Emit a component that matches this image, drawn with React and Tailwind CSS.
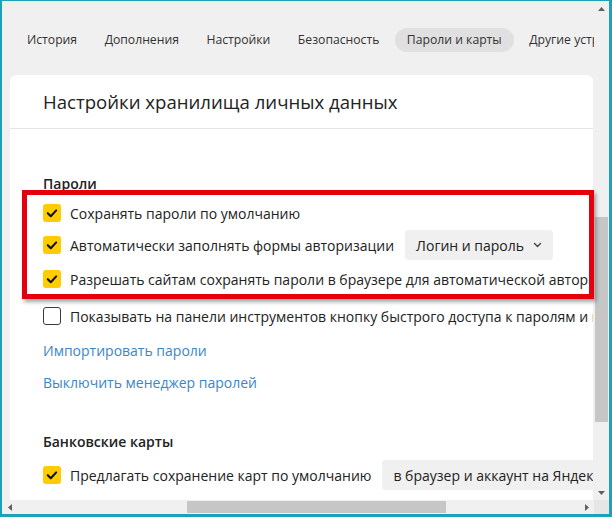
import React from "react";

const Check = () => (
  <span className="w-[18px] h-[18px] rounded-[3px] bg-[#ffcc00] flex items-center justify-center shrink-0">
    <svg width="18" height="18" viewBox="0 0 18 18">
      <path d="M4.8 9.2 L7.8 12.2 L13.2 6.4" fill="none" stroke="#111" strokeWidth="2.1" strokeLinecap="round" strokeLinejoin="round" />
    </svg>
  </span>
);

const Empty = () => (
  <span className="w-[18px] h-[18px] rounded-[3px] border-[1.5px] border-[#3a3a3a] bg-white shrink-0" />
);

const Chevron = () => (
  <svg width="9" height="6" viewBox="0 0 9 6" className="ml-[9px]">
    <path d="M1.5 1.5 L4.5 4.5 L7.5 1.5" fill="none" stroke="#444" strokeWidth="1.4" strokeLinecap="round" strokeLinejoin="round" />
  </svg>
);

const Row = ({ checked = true, children, className = "" }) => (
  <div className={"h-[32px] flex items-center whitespace-nowrap " + className}>
    {checked ? <Check /> : <Empty />}
    <span className="ml-[9px]">{children}</span>
  </div>
);

const Tri = ({ dir }) => {
  const d = {
    up: "M0 5 L3.5 1 L7 5 Z",
    down: "M0 1 L3.5 5 L7 1 Z",
    left: "M5 0 L1 3.5 L5 7 Z",
    right: "M1 0 L5 3.5 L1 7 Z",
  }[dir];
  const vb = dir === "up" || dir === "down" ? "0 0 7 6" : "0 0 6 7";
  const w = dir === "up" || dir === "down" ? 7 : 6;
  const h = dir === "up" || dir === "down" ? 6 : 7;
  return (
    <svg width={w} height={h} viewBox={vb}>
      <path d={d} fill="#606060" />
    </svg>
  );
};

export default function App() {
  const tabs = ["История", "Дополнения", "Настройки", "Безопасность", "Пароли и карты", "Другие устройства"];
  return (
    <div
      className="w-[612px] h-[517px] overflow-hidden relative bg-[#f0f0f0] border-[#1ca2b6] border-t border-l-2 border-r-[3px] border-b-[3px] grid grid-cols-[1fr_15px] grid-rows-[1fr_14px] text-[#222]"
      style={{ fontFamily: '"Open Sans", "Noto Sans", sans-serif' }}
    >
      {/* main area */}
      <div className="flex flex-col overflow-hidden min-w-0">
        <div className="flex items-center pt-[27px] pl-[13px] gap-[3.5px] whitespace-nowrap text-[12.2px] text-[#333]">
          {tabs.map((t) => (
            <div
              key={t}
              className={
                "h-[24px] px-3 flex items-center rounded-full shrink-0 " +
                (t === "Пароли и карты" ? "bg-[#e0e0e0]" : "")
              }
            >
              {t}
            </div>
          ))}
        </div>

        <div className="mt-[23px] ml-[8px] mr-px flex-1 bg-white rounded-t-md overflow-hidden flex flex-col min-w-0">
          <div className="h-[54px] shrink-0 border-b border-[#e4e4e4] flex items-center pl-[33px] text-[18.6px] text-[#222] whitespace-nowrap">
            Настройки хранилища личных данных
          </div>

          <div className="pl-[33px] flex flex-col text-[14px] text-[#222] min-w-0">
            <div className="mt-[44px] h-[20px] flex items-center font-semibold">Пароли</div>
            <Row className="mt-[4px]">Сохранять пароли по умолчанию</Row>
            <div className="h-[32px] flex items-center whitespace-nowrap">
              <Check />
              <span className="ml-[9px]">Автоматически заполнять формы авторизации</span>
              <div className="ml-[11px] h-[30px] px-[11px] rounded-[4px] bg-[#f0f0f0] flex items-center">
                Логин и пароль
                <Chevron />
              </div>
            </div>
            <Row className="mt-[2px]">Разрешать сайтам сохранять пароли в браузере для автоматической авторизации</Row>
            <Row checked={false} className="mt-[5px]">
              Показывать на панели инструментов кнопку быстрого доступа к паролям и картам
            </Row>
            <div className="mt-[2px] h-[32px] flex items-center text-[#3a86c8] whitespace-nowrap">Импортировать пароли</div>
            <div className="h-[32px] flex items-center text-[#3a86c8] whitespace-nowrap">Выключить менеджер паролей</div>
            <div className="mt-[33px] h-[20px] flex items-center font-semibold">Банковские карты</div>
            <div className="mt-[8px] h-[32px] flex items-center whitespace-nowrap">
              <Check />
              <span className="ml-[9px]">Предлагать сохранение карт по умолчанию</span>
              <div className="ml-[11px] h-[30px] px-[11px] rounded-[4px] bg-[#f0f0f0] flex items-center">
                в браузер и аккаунт на Яндексе
                <Chevron />
              </div>
            </div>
          </div>
        </div>
      </div>

      {/* vertical scrollbar */}
      <div className="flex flex-col bg-[#f0f0f0]">
        <div className="h-[15px] flex items-center justify-center shrink-0">
          <Tri dir="up" />
        </div>
        <div className="h-[201px] shrink-0" />
        <div className="h-[205px] shrink-0 mx-px bg-[#c6c6c6]" />
        <div className="flex-1" />
        <div className="h-[15px] flex items-center justify-center shrink-0">
          <Tri dir="down" />
        </div>
      </div>

      {/* horizontal scrollbar */}
      <div className="flex flex-row bg-[#f0f0f0]">
        <div className="w-[15px] flex items-center justify-center shrink-0">
          <Tri dir="left" />
        </div>
        <div className="w-[170px] shrink-0" />
        <div className="w-[259px] shrink-0 my-px bg-[#c6c6c6]" />
        <div className="flex-1" />
        <div className="w-[15px] flex items-center justify-center shrink-0">
          <Tri dir="right" />
        </div>
      </div>
      <div className="bg-[#e6e6e6]" />

      {/* red annotation frame */}
      <div className="absolute left-[20px] top-[189px] w-[572px] h-[109px] border-[5px] border-[#e4000c] shadow-[2px_3px_4px_rgba(0,0,0,0.35)] pointer-events-none" />
    </div>
  );
}
